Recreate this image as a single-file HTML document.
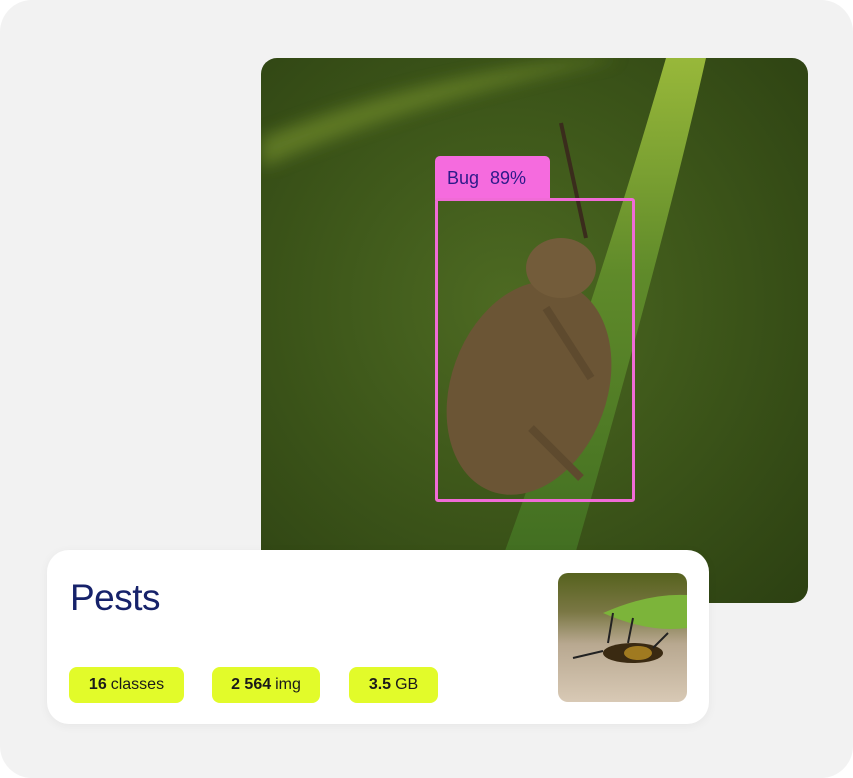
<!DOCTYPE html>
<html><head><style>
*{margin:0;padding:0;box-sizing:border-box}
body{width:853px;height:778px;background:#fff;position:relative;overflow:hidden;font-family:"Liberation Sans",sans-serif}
.bg{position:absolute;left:0;top:0;width:853px;height:778px;background:#f2f2f2;border-radius:32px}
.photo{position:absolute;left:261px;top:58px;width:547px;height:545px;border-radius:16px;overflow:hidden;background:radial-gradient(ellipse at 45% 45%,#4d6a22 0%,#3c5519 50%,#2c4012 100%)}
.card{position:absolute;left:47px;top:550px;width:662px;height:174px;background:#fff;border-radius:22px;box-shadow:0 2px 10px rgba(0,0,0,.05)}
.title{position:absolute;left:23px;top:27px;font-size:37px;color:#16226a;letter-spacing:-0.5px}
.pill{position:absolute;top:117px;height:36px;background:#e2fb2a;border-radius:8px;font-size:16px;color:#1a1a1a;display:flex;align-items:center;justify-content:center}
.pill b{margin-right:4px}
.thumb{position:absolute;left:511px;top:23px;width:129px;height:129px;border-radius:10px;overflow:hidden;background:linear-gradient(#56621e 0%,#7a7744 30%,#b8a890 55%,#d8c9b5 100%)}
.box{position:absolute;left:435px;top:198px;width:200px;height:304px;border:3px solid #f06bd6;border-radius:3px}
.lab{position:absolute;left:435px;top:156px;width:115px;height:44px;background:#f56bde;border-radius:5px 5px 0 0;color:#2d1a8a;font-size:18px;padding:12px 0 0 12px;word-spacing:6px}
</style></head><body>
<div class="bg"></div>
<div class="photo">
<svg width="547" height="545" viewBox="0 0 547 545">
<defs><linearGradient id="g" x1="0" y1="0" x2="0" y2="1"><stop offset="0" stop-color="#98b83a"/><stop offset=".4" stop-color="#5f8a2a"/><stop offset="1" stop-color="#3d6a20"/></linearGradient>
<filter id="b"><feGaussianBlur stdDeviation="8"/></filter></defs>
<path d="M0 80 Q150 20 330 0 L360 0 Q160 40 0 110Z" fill="#6f8a2a" opacity=".7" filter="url(#b)"/>
<path d="M405 0 L445 0 Q400 200 300 545 L225 545 Q330 260 405 0Z" fill="url(#g)"/>
<ellipse cx="268" cy="330" rx="78" ry="110" transform="rotate(20 268 330)" fill="#6b5535"/>
<ellipse cx="300" cy="210" rx="35" ry="30" fill="#735c3a"/>
<path d="M325 180 L300 65" stroke="#3a2c1c" stroke-width="4"/>
<path d="M285 250 L330 320 M270 370 L320 420" stroke="#5e4a2e" stroke-width="8"/>
</svg>
</div>
<div class="lab">Bug 89%</div>
<div class="box"></div>
<div class="card">
<div class="title">Pests</div>
<div class="pill" style="left:22px;width:115px"><b>16</b>classes</div>
<div class="pill" style="left:165px;width:108px"><b>2 564</b>img</div>
<div class="pill" style="left:302px;width:89px"><b>3.5</b>GB</div>
<div class="thumb"><svg width="129" height="129"><path d="M45 40 Q90 20 129 22 L129 55 Q90 60 45 40Z" fill="#7cb43a"/><ellipse cx="75" cy="80" rx="30" ry="10" fill="#3a2a12"/><ellipse cx="80" cy="80" rx="14" ry="7" fill="#a07a20"/><path d="M45 78 L15 85 M50 70 L55 40 M70 70 L75 45 M95 75 L110 60" stroke="#222" stroke-width="2"/></svg></div>
</div>
</body></html>
